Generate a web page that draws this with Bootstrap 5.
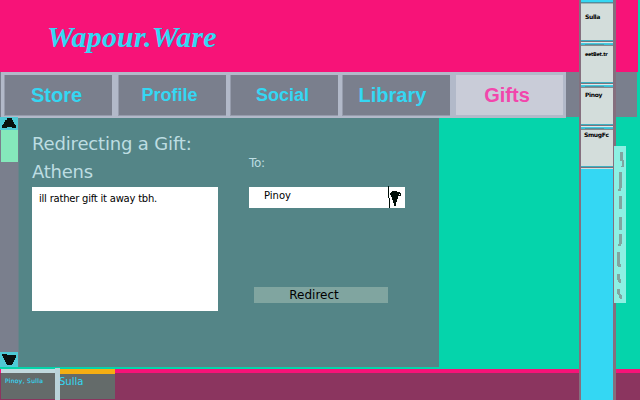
<!DOCTYPE html>
<html lang="en">
<head>
<meta charset="utf-8">
<title>Wapour.Ware</title>
<link href="https://cdn.jsdelivr.net/npm/bootstrap@5.3.0/dist/css/bootstrap.min.css" rel="stylesheet">
<style>
body{width:640px;height:400px;background:#05d4ab;font-family:"DejaVu Sans",sans-serif;line-height:1}
.edge{width:638px}
.masthead{height:72px;background:#f71378;padding:21px 0 0 47px}
.masthead h1{font:italic bold 30px/32px "Liberation Serif",serif;letter-spacing:.15px;color:#34d7f3;white-space:nowrap}
.tabstrip{height:46px;background:linear-gradient(#7a7f8d,#7a7f8d) 0 0/637px 45px no-repeat}
.tabset{width:565px;height:46px;margin-left:1px;padding:3px 0 2px 3px;background:#b2b9c9}
.tabset .nav-link{width:108px;height:41px;padding:0;background:#7a7f8d;border:solid #969cac;border-width:0 0 1px 1px;border-radius:0;color:#34d7f3;font:bold 18px/41px "Liberation Sans",sans-serif;text-align:center}
.tabset .nav-link.big{font-size:20px;line-height:40px}
.tabset .nav-link.active{background:#c9ccd8;color:#f246ac;border-color:#c9ccd8;width:107px;height:40px}
.workspace{height:249px}
.scroller{width:19px;background:#7a7f8d;border-right:1px solid #69828a}
.scroller .arrow{width:18px;height:13px;background:#4fc9d5}
.scroller .arrow.up{margin-top:-1px}
.scroller .arrow.down{height:15px}
.thumb{width:17px;height:32px;margin-left:1px;background:#85e8bb}
.pane{width:420px;background:#548587;padding:14px 0 0 13px;color:#bddde2}
.left-col{width:186px;margin-right:31px}
.pane h2{font-size:18px;line-height:24px;letter-spacing:-.16px;white-space:nowrap}
.pane h3{font-size:18px;line-height:24px;letter-spacing:-.25px;margin-top:4px}
.note{width:186px;height:124px;margin-top:3px;padding:6px 7px;background:#fff;color:#000;font-size:10px;line-height:12px;letter-spacing:-.22px;border:0;border-radius:0;resize:none;display:block;overflow:hidden}
.to-label{font-size:12px;line-height:14px;letter-spacing:-.3px;margin-top:24px}
.picker{width:156px;height:21px;margin-top:17px;padding-left:15px;background:#fff;color:#000;font-size:10px;line-height:17px;border:0;text-align:left}
.btn-redirect{width:134px;height:16px;margin:79px 0 0 5px;padding:0 49px 0 35px;border:0;border-radius:0;background:#80a5a0;color:#000;font-size:12px;line-height:16px}
.taskbar{height:31px;margin-top:2px;background:linear-gradient(#f71378 4px,#8b355f 4px);padding-left:1px}
.task{height:30px;background:#646b6a;color:#34d7f3;white-space:nowrap}
.task-a{width:54px;border-top:4px solid #c1d9de;padding:5px 0 0 4px;font-size:6px;letter-spacing:.3px;-webkit-text-stroke:.15px #34d7f3}
.task-b{width:55px;border-top:5px solid #f5ae13;font-size:10px;padding-top:3px}
.task-b span{margin-left:-1px}
.gap-bar{width:5px;height:32px;margin-top:-1px;background:#bad3da}
.dock{left:579px;top:0;width:37px;height:400px;background:#34d7f3;border:solid #856f7e;border-width:0 3px 0 2px}
.dock-top{height:4px;background:linear-gradient(#34d7f3 2px,#4d8ea0 2px 3px,#a5b2b3 3px)}
.contact{height:36px;padding:9px 0 0 4px;background:#d3dddb;color:#000;font-size:6px;line-height:8px;letter-spacing:-.35px;font-weight:bold;white-space:nowrap}
.seam{height:6px;background:linear-gradient(90deg,transparent 4px,#4b95a4 4px 23px,transparent 23px) 0 4px/100% 1px no-repeat,linear-gradient(#3fb0c2 1px,#76747e 1px 2px,#e1e8e8 2px 3px,#42c9df 3px 4px,#39bfd4 4px 5px,#87898d 5px)}
.seam-end{height:3px;background:linear-gradient(#3fb0c2 1px,#76747e 1px 2px,#d3dddb 2px)}
.tag{left:614px;top:146px;width:12px;height:157px;background:#8df0e3}
</style>
<script src="https://cdn.jsdelivr.net/npm/bootstrap@5.3.0/dist/js/bootstrap.bundle.min.js"></script>
</head>
<body class="position-relative overflow-hidden">
<header class="masthead edge"><h1 class="m-0"><span>Wapour.Ware</span></h1></header>
<div class="tabstrip edge">
  <nav class="tabset nav flex-nowrap">
    <a class="nav-link big" href="#" style="padding-right:4px">Store</a>
    <a class="nav-link" href="#" style="margin-left:6px;padding-right:6px">Profile</a>
    <a class="nav-link" href="#" style="margin-left:4px;padding-right:4px">Social</a>
    <a class="nav-link big" href="#" style="margin-left:4px;padding-right:8px">Library</a>
    <a class="nav-link big active" href="#" style="margin-left:6px;padding-right:6px">Gifts</a>
  </nav>
</div>
<main class="workspace d-flex">
  <div class="scroller d-flex flex-column">
    <svg class="arrow up d-block" viewBox="0 0 18 13" shape-rendering="crispEdges"><path d="M7 1h5v2h1v2h1v2h1v1h1v3h-4v-1h-5v1h-5v-3h1v-1h1v-2h1v-2h2z" fill="#0a100f"/></svg>
    <div class="thumb"></div>
    <svg class="arrow down d-block mt-auto" viewBox="0 0 18 15" shape-rendering="crispEdges"><path d="M2 2h5v1h9v3h-1v2h-1v2h-1v2h-1v1h-5v-1h-1v-2h-1v-2h-1v-2h-1v-2h-1z" fill="#0a100f"/></svg>
  </div>
  <section class="pane d-flex">
    <div class="left-col">
      <h2 class="m-0 fw-normal"><span>Redirecting a Gift:</span></h2>
      <h3 class="mb-0 fw-normal">Athens</h3>
      <textarea class="note" aria-label="Message">ill rather gift it away tbh.</textarea>
    </div>
    <div>
      <div class="to-label">To:</div>
      <button class="picker d-flex justify-content-between p-0" type="button"><span style="margin-left:15px">Pinoy</span>
        <svg width="18" height="23" viewBox="0 0 18 23" style="margin-top:-1px" shape-rendering="crispEdges"><path d="M1 0h1v12h1v10h-1v-10h-1zM4 6h1v-1h5v1h3v1h-1v3h-1v3h-1v3h-1v4h-2v-3h-1v-3h-1v-3h-1v-2h-1v-2h0z" fill="#000e08"/><path d="M10 7.5h3v2h-2" fill="none" stroke="#000e08"/></svg>
      </button>
      <button class="btn-redirect btn d-block" type="button">Redirect</button>
    </div>
  </section>
</main>
<footer class="taskbar d-flex">
  <div class="task task-a">Pinoy, Sulla</div>
  <div class="gap-bar"></div>
  <div class="task task-b"><span>Sulla</span></div>
</footer>
<aside class="dock position-absolute">
  <div class="dock-top"></div>
  <div class="contact">Sulla</div><div class="seam"></div>
  <div class="contact" style="padding-top:4px"><span style="font-size:5px">eetBet.tr</span></div><div class="seam"></div>
  <div class="contact" style="padding-top:3px">Pinoy</div><div class="seam"></div>
  <div class="contact" style="padding:1px 0 0 3px">SmugFc</div><div class="seam-end"></div>
</aside>
<svg class="tag position-absolute" viewBox="0 0 12 157" shape-rendering="crispEdges"><path fill="#80a5a0" d="M6 6h3v8h1v7h-3v-1h1v-5h-2zM5 26h3v16h-1v3h-3v-2h1zM5 50h3v13h-3zM5 71h3v13h-3zM5 88h3v10h-1v2h-3v-2h1zM3 106h3v12h1v3h-3v-1h-1zM3 128h3v5h1v4h-2v-1h-1v-2h-1zM3 143h3v5h1v1h1v4h-2v-1h-1v-3h-1v-1h-1z"/></svg>
</body>
</html>
